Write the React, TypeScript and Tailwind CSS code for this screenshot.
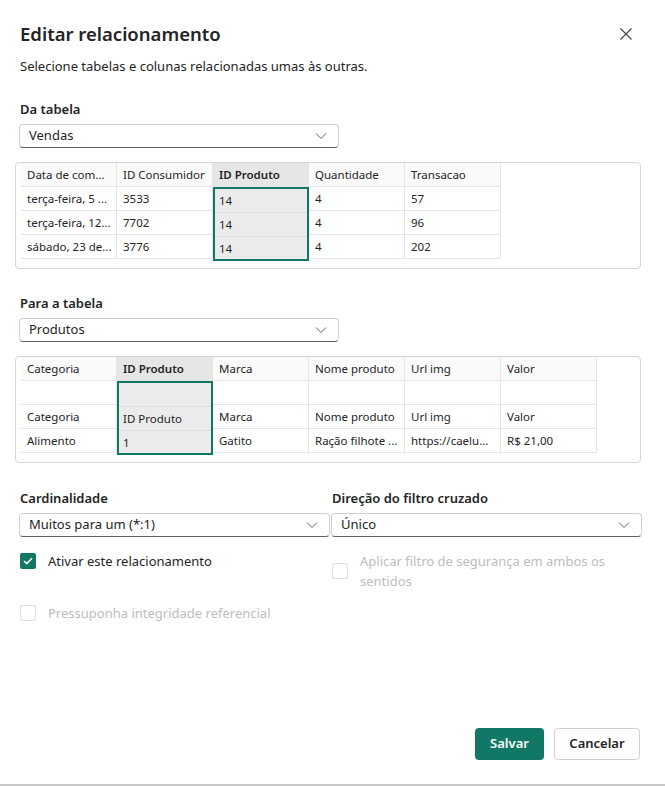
import { useState } from 'react';

const font = { fontFamily: '"Noto Sans", "Open Sans", sans-serif' };

function Chevron() {
  return (
    <svg width="12" height="8" viewBox="0 0 12 8" className="text-[#616161]">
      <path d="M1 1.5 L6 6.5 L11 1.5" fill="none" stroke="currentColor" strokeWidth="1" />
    </svg>
  );
}

function Dropdown({ value, width }: { value: string; width: string }) {
  return (
    <div
      className={`${width} h-[24px] flex items-center justify-between pl-[9px] pr-[11px] border border-[#d1d1d1] border-b-[#616161] rounded-[4px] bg-white text-[13px] text-[#242424]`}
    >
      <span>{value}</span>
      <Chevron />
    </div>
  );
}

type Col = { name: string; cells: string[]; selected?: boolean };

function DataTable({ columns }: { columns: Col[] }) {
  return (
    <div className="ml-[15px] w-[626px] h-[107px] border border-[#d6d6d6] rounded-[4px] pl-[5px]">
      <div className="flex">
        {columns.map((c) => (
          <div key={c.name} className="w-[96px] flex flex-col">
            <div
              className={`h-[24px] flex items-center px-[6px] border-r border-b border-[#e6e6e6] text-[11.5px] whitespace-nowrap overflow-hidden ${
                c.selected ? 'bg-[#e6e6e6] font-semibold text-[#242424]' : 'bg-[#fafafa] text-[#242424]'
              }`}
            >
              {c.name}
            </div>
            <div className={c.selected ? 'border-2 border-[#117865] bg-[#ebebeb]' : ''}>
              {c.cells.map((cell, i) => (
                <div
                  key={i}
                  className={`flex items-center text-[11.5px] text-[#242424] whitespace-nowrap overflow-hidden ${
                    c.selected
                      ? 'h-[24px] px-[4px] pt-[1px] border-b border-[#e0e0e0] last:border-b-0 last:h-[22px]'
                      : 'h-[24px] px-[6px] border-r border-b border-[#e6e6e6]'
                  }`}
                >
                  {cell}
                </div>
              ))}
            </div>
          </div>
        ))}
      </div>
    </div>
  );
}

function Checkbox({ checked, disabled }: { checked?: boolean; disabled?: boolean }) {
  if (checked) {
    return (
      <div className="w-[16px] h-[16px] rounded-[2px] bg-[#117865] flex items-center justify-center shrink-0">
        <svg width="10" height="8" viewBox="0 0 10 8">
          <path d="M1 4 L3.8 6.6 L9 1.2" fill="none" stroke="white" strokeWidth="1.6" />
        </svg>
      </div>
    );
  }
  return (
    <div
      className={`w-[16px] h-[16px] rounded-[2px] border shrink-0 ${
        disabled ? 'border-[#e0e0e0]' : 'border-[#616161]'
      }`}
    />
  );
}

export default function App() {
  const [active] = useState(true);

  const fromCols: Col[] = [
    { name: 'Data de com...', cells: ['terça-feira, 5 ...', 'terça-feira, 12...', 'sábado, 23 de...'] },
    { name: 'ID Consumidor', cells: ['3533', '7702', '3776'] },
    { name: 'ID Produto', cells: ['14', '14', '14'], selected: true },
    { name: 'Quantidade', cells: ['4', '4', '4'] },
    { name: 'Transacao', cells: ['57', '96', '202'] },
  ];

  const toCols: Col[] = [
    { name: 'Categoria', cells: ['', 'Categoria', 'Alimento'] },
    { name: 'ID Produto', cells: ['', 'ID Produto', '1'], selected: true },
    { name: 'Marca', cells: ['', 'Marca', 'Gatito'] },
    { name: 'Nome produto', cells: ['', 'Nome produto', 'Ração filhote ...'] },
    { name: 'Url img', cells: ['', 'Url img', 'https://caelu...'] },
    { name: 'Valor', cells: ['', 'Valor', 'R$ 21,00'] },
  ];

  return (
    <div style={font} className="w-[665px] h-[786px] bg-white flex flex-col border-b-2 border-[#c8c8c8] text-[#242424]">
      <div className="flex items-center justify-between pl-[20px] pr-[33px] pt-[20px]">
        <h1 className="text-[18.5px] font-semibold leading-[28px]">Editar relacionamento</h1>
        <svg width="12" height="12" viewBox="0 0 12 12">
          <path d="M0.5 0.5 L11.5 11.5 M11.5 0.5 L0.5 11.5" stroke="#424242" strokeWidth="1.1" />
        </svg>
      </div>
      <p className="pl-[20px] mt-[8px] text-[13px] leading-[20px]">
        Selecione tabelas e colunas relacionadas umas às outras.
      </p>

      <div className="pl-[20px] mt-[23px] text-[13px] font-semibold leading-[20px]">Da tabela</div>
      <div className="pl-[19px] mt-[5px]">
        <Dropdown value="Vendas" width="w-[320px]" />
      </div>
      <div className="mt-[14px]">
        <DataTable columns={fromCols} />
      </div>

      <div className="pl-[20px] mt-[24px] text-[13px] font-semibold leading-[20px]">Para a tabela</div>
      <div className="pl-[19px] mt-[5px]">
        <Dropdown value="Produtos" width="w-[320px]" />
      </div>
      <div className="mt-[14px]">
        <DataTable columns={toCols} />
      </div>

      <div className="flex pl-[19px] mt-[25px] gap-[1px]">
        <div className="flex flex-col">
          <div className="pl-[1px] text-[13px] font-semibold leading-[20px]">Cardinalidade</div>
          <div className="mt-[5px]">
            <Dropdown value="Muitos para um (*:1)" width="w-[311px]" />
          </div>
          <div className="flex items-start gap-[12px] mt-[14px] pl-[1px]">
            <div className="pt-[2px]">
              <Checkbox checked={active} />
            </div>
            <span className="text-[13px] leading-[20px]">Ativar este relacionamento</span>
          </div>
          <div className="flex items-start gap-[12px] mt-[32px] pl-[1px]">
            <div className="pt-[2px]">
              <Checkbox disabled />
            </div>
            <span className="text-[13px] leading-[20px] text-[#bdbdbd]">Pressuponha integridade referencial</span>
          </div>
        </div>
        <div className="flex flex-col">
          <div className="pl-[1px] text-[13px] font-semibold leading-[20px]">Direção do filtro cruzado</div>
          <div className="mt-[5px]">
            <Dropdown value="Único" width="w-[311px]" />
          </div>
          <div className="flex items-center gap-[12px] mt-[14px] pl-[1px]">
            <Checkbox disabled />
            <span className="text-[13px] leading-[20px] text-[#bdbdbd] w-[260px]">
              Aplicar filtro de segurança em ambos os sentidos
            </span>
          </div>
        </div>
      </div>

      <div className="flex-1" />
      <div className="flex justify-end gap-[10px] pr-[25px] mb-[24px]">
        <button className="w-[69px] h-[32px] rounded-[4px] bg-[#117865] text-white text-[13px] font-semibold">
          Salvar
        </button>
        <button className="w-[86px] h-[32px] rounded-[4px] border border-[#d1d1d1] bg-white text-[13px] font-semibold text-[#242424]">
          Cancelar
        </button>
      </div>
    </div>
  );
}
